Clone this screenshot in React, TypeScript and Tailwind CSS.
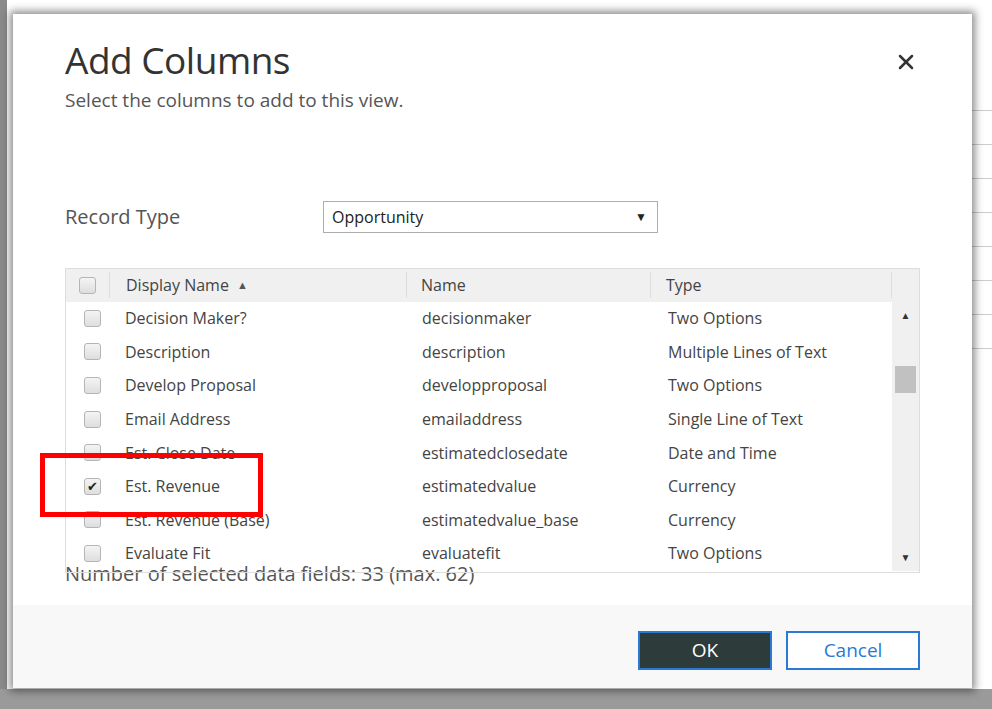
import { X } from "lucide-react";

const rows = [
  { d: "Decision Maker?", n: "decisionmaker", t: "Two Options" },
  { d: "Description", n: "description", t: "Multiple Lines of Text" },
  { d: "Develop Proposal", n: "developproposal", t: "Two Options" },
  { d: "Email Address", n: "emailaddress", t: "Single Line of Text" },
  { d: "Est. Close Date", n: "estimatedclosedate", t: "Date and Time" },
  { d: "Est. Revenue", n: "estimatedvalue", t: "Currency", checked: true },
  { d: "Est. Revenue (Base)", n: "estimatedvalue_base", t: "Currency" },
  { d: "Evaluate Fit", n: "evaluatefit", t: "Two Options" },
];

function Box({ checked }: { checked?: boolean }) {
  return (
    <span className="flex h-[17px] w-[17px] items-center justify-center rounded-[3px] border border-[#b5b5b5] bg-gradient-to-b from-[#f4f4f4] to-[#dedede] text-[13px] leading-none text-[#222]">
      {checked ? "✔" : ""}
    </span>
  );
}

export default function App() {
  return (
    <div
      className="relative h-[709px] w-[992px] overflow-hidden bg-white text-[#444]"
      style={{ fontFamily: '"Open Sans", "Liberation Sans", sans-serif' }}
    >
      {/* page behind */}
      <div className="absolute left-0 top-0 h-full w-[7px] bg-[#8a8a8a]" />
      <div className="absolute bottom-0 left-0 h-[20px] w-full bg-[#9a9a9a]" />
      <div className="absolute right-0 top-[110px] flex w-[20px] flex-col gap-[33px]">
        {[0, 1, 2, 3, 4, 5, 6, 7].map((i) => (
          <div key={i} className="h-px bg-[#ccc]" />
        ))}
      </div>

      <div className="absolute left-[13px] top-[14px] flex h-[674px] w-[959px] flex-col bg-white shadow-[0_0_8px_3px_rgba(0,0,0,0.45)]">
        <div className="relative flex-1 px-[52px] pt-[22px]">
          <button className="absolute right-[54px] top-[36px] text-[#333]">
            <X size={24} strokeWidth={2.5} />
          </button>
          <h1 className="text-[37px] leading-[48px] tracking-[-0.5px] text-[#333]">Add Columns</h1>
          <p className="mt-[2px] text-[19px] text-[#555]">Select the columns to add to this view.</p>

          <div className="mt-[86px] flex items-center">
            <span className="w-[258px] text-[20px] text-[#555]">Record Type</span>
            <div className="flex h-[32px] w-[335px] items-center justify-between border border-[#adadad] pl-[8px] pr-[10px] text-[16px] text-[#222]">
              <span>Opportunity</span>
              <span className="text-[12px]">▼</span>
            </div>
          </div>

          <div className="relative mt-[35px] h-[305px] w-[855px] border border-[#ddd] text-[16px]">
            <div className="flex h-[33px] items-center bg-[#f0f0f0]">
              <div className="flex h-[26px] w-[44px] items-center justify-center border-r border-[#ddd]">
                <Box />
              </div>
              <div className="flex h-[26px] w-[297px] items-center gap-2 border-r border-[#ddd] pl-[16px]">
                Display Name <span className="text-[11px] text-[#555]">▲</span>
              </div>
              <div className="h-[26px] w-[244px] border-r border-[#ddd] pl-[14px] leading-[26px]">Name</div>
              <div className="h-[26px] w-[241px] border-r border-[#ddd] pl-[15px] leading-[26px]">Type</div>
            </div>
            <div className="flex">
              <div className="flex-1">
                {rows.map((r) => (
                  <div key={r.n} className="flex h-[33.6px] items-center">
                    <div className="flex w-[50px] justify-center pl-[2px]">
                      <Box checked={r.checked} />
                    </div>
                    <div className="w-[306px] pl-[9px]">{r.d}</div>
                    <div className="w-[246px]">{r.n}</div>
                    <div>{r.t}</div>
                  </div>
                ))}
              </div>
              <div className="relative flex h-[269px] w-[27px] flex-col items-center bg-[#f0f0f0]">
                <span className="mt-[6px] text-[10px] text-[#333]">▲</span>
                <div className="mt-[43px] h-[27px] w-[21px] bg-[#c1c1c1]" />
                <span className="absolute bottom-[6px] text-[10px] text-[#333]">▼</span>
              </div>
            </div>
          </div>

          <p className="-mt-[14px] text-[20px] text-[#555]">Number of selected data fields: 33 (max. 62)</p>

          <div className="absolute left-[27px] top-[439px] h-[64px] w-[223px] border-[5px] border-[#ff0000]" />
        </div>

        <div className="flex h-[83px] items-center justify-end gap-[14px] bg-[#f8f8f8] pr-[52px] pt-[7px]">
          <button className="h-[39px] w-[134px] border-2 border-[#2a7ad5] bg-[#2d3b3b] text-[19px] text-white">OK</button>
          <button className="h-[39px] w-[134px] border-2 border-[#2a7ad5] bg-white text-[19px] text-[#2a7ad5]">Cancel</button>
        </div>
      </div>
    </div>
  );
}
